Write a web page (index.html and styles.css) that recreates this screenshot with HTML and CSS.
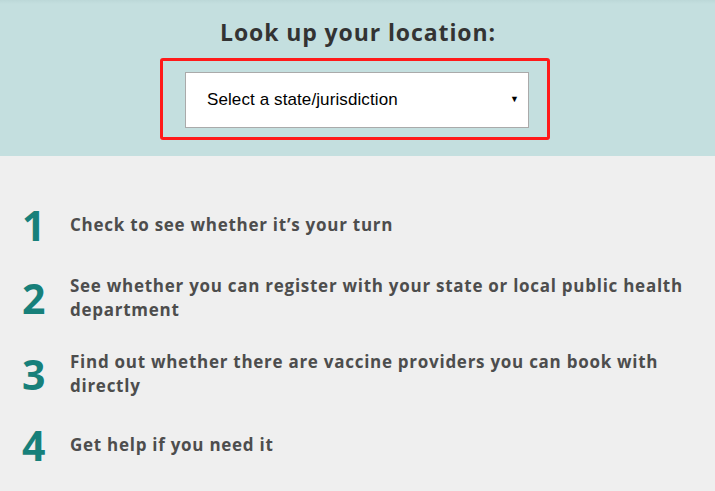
FILE: index.html
```html
<!DOCTYPE html>
<html>
<head>
<meta charset="utf-8">
<link rel="stylesheet" href="styles.css">
</head>
<body>
<header class="lookup">
  <h2 class="lookup-title">Look up your location:</h2>
  <div class="highlight">
    <div class="select">
      <span class="select-label">Select a state/jurisdiction</span>
      <span class="select-arrow">&#9660;</span>
    </div>
  </div>
</header>
<main class="steps">
  <div class="step step-1">
    <span class="num">1</span>
    <p class="text">Check to see whether it’s your turn</p>
  </div>
  <div class="step step-2">
    <span class="num">2</span>
    <p class="text">See whether you can register with your state or local public health department</p>
  </div>
  <div class="step step-3">
    <span class="num">3</span>
    <p class="text">Find out whether there are vaccine providers you can book with directly</p>
  </div>
  <div class="step step-4">
    <span class="num">4</span>
    <p class="text">Get help if you need it</p>
  </div>
</main>
</body>
</html>
```
FILE: styles.css
```css
html, body {
  margin: 0;
  padding: 0;
  background: #efefef;
}
body {
  width: 715px;
  height: 491px;
  overflow: hidden;
  font-family: "Open Sans", "DejaVu Sans", sans-serif;
}
.lookup {
  height: 156px;
  box-sizing: border-box;
  background: linear-gradient(#bcd8d8 0, #c4dfdf 4px, #c4dfdf 100%);
  display: flex;
  flex-direction: column;
  align-items: center;
  padding-top: 16px;
}
.lookup-title {
  margin: 0 0 0 1px;
  font-size: 23px;
  line-height: 32px;
  font-weight: 700;
  color: #333;
  letter-spacing: 0.9px;
}
.highlight {
  margin: 10px 5px 0 0;
  width: 390px;
  height: 82px;
  box-sizing: border-box;
  border: 3px solid #ff1a1a;
  border-radius: 3px;
  padding: 11px 18px 0 22px;
}
.select {
  width: 344px;
  height: 56px;
  box-sizing: border-box;
  background: #fff;
  border: 1px solid #aaa;
  display: flex;
  align-items: center;
  justify-content: space-between;
  padding: 0 9px 0 21px;
  font-family: "Liberation Sans", Arial, sans-serif;
  font-size: 17px;
  letter-spacing: 0.1px;
  color: #000;
}
.select-arrow {
  font-size: 9px;
  margin-top: -2px;
}
.steps {
  padding-top: 45px;
}
.step {
  display: flex;
  align-items: center;
  height: 48px;
}
.step-2 { margin-top: 25px; }
.step-3 { margin-top: 28px; }
.step-4 { margin-top: 23px; }
.num {
  width: 70px;
  padding-left: 22px;
  box-sizing: border-box;
  font-size: 41px;
  font-weight: 700;
  color: #17807a;
  line-height: 46px;
}
.text {
  margin: 0;
  flex: 1;
  padding-right: 20px;
  font-size: 17px;
  line-height: 24px;
  font-weight: 700;
  color: #4d4d4d;
  letter-spacing: 0.73px;
}
```
